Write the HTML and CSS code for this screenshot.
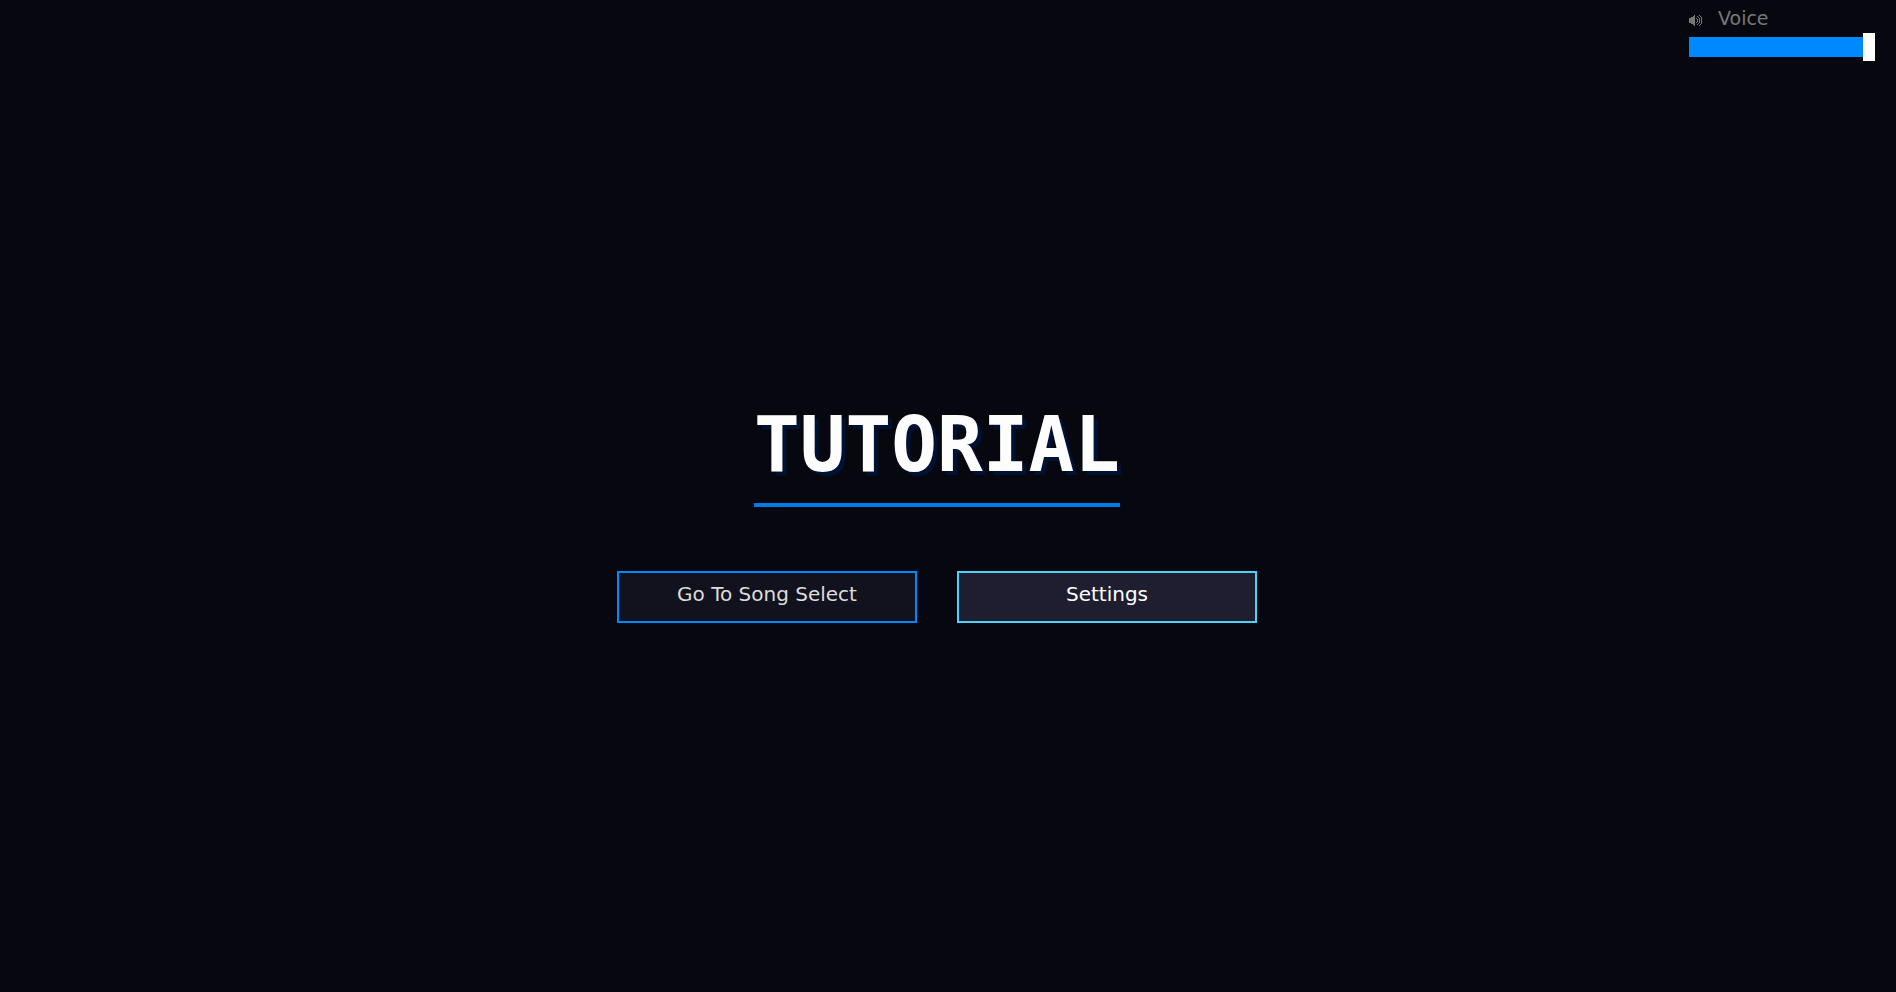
FILE: index.html
```html
<!DOCTYPE html>
<html lang="en">
<head>
  <meta charset="UTF-8">
  <meta name="viewport" content="width=device-width, initial-scale=1.0">
  <title>Tutorial</title>
  <link rel="stylesheet" href="styles.css">
</head>
<body>
  <div class="voice-control">
    <label for="voice">
      <svg class="voice-icon" viewBox="0 0 13 11" width="13" height="11" shape-rendering="crispEdges" aria-hidden="true">
        <path d="M0 3h2v5H0zM2 2h2v7H2zM4 1h1v9H4zM5 0h1v11H5z"/>
        <path d="M7 3h1v1H7zM8 4h1v3H8zM7 7h1v1H7zM8 1h1v1H8zM9 2h1v1H9zM10 3h1v5h-1zM9 8h1v1H9zM8 9h1v1H8zM10 0h1v1h-1zM11 1h1v1h-1zM12 2h1v7h-1zM11 9h1v1h-1zM10 10h1v1h-1z"/>
      </svg>
      <span>Voice</span>
    </label>
    <input type="range" id="voice" class="voice-slider" min="0" max="100" value="100">
  </div>

  <main class="menu">
    <h1 class="title">TUTORIAL</h1>
    <div class="menu-buttons">
      <button type="button" class="menu-btn">Go To Song Select</button>
      <button type="button" class="menu-btn active">Settings</button>
    </div>
  </main>
</body>
</html>
```
FILE: styles.css
```css
* {
  box-sizing: border-box;
}

body {
  margin: 0;
  min-height: 100vh;
  display: flex;
  flex-direction: column;
  padding-top: 8px;
  background-color: #07080f;
  color: #fff;
  font-family: "DejaVu Sans", sans-serif;
}

/* Volume slider in the top right corner */
.voice-control {
  align-self: flex-end;
  width: 186px;
  margin-right: 21px;
}

.voice-control label {
  display: flex;
  align-items: flex-start;
  gap: 16px;
  height: 24px;
  color: #777;
  font-size: 19px;
  line-height: 20px;
}

.voice-icon {
  margin-top: 7px;
  fill: #777;
}

.voice-slider {
  -webkit-appearance: none;
  appearance: none;
  display: block;
  width: 100%;
  height: 30px;
  margin: 0;
  background: linear-gradient(#0088ff, #0088ff) center / 100% 20px no-repeat;
  cursor: pointer;
}

.voice-slider::-webkit-slider-thumb {
  -webkit-appearance: none;
  width: 12px;
  height: 28px;
  background-color: #fff;
}

/* Title and buttons */
.menu {
  flex: 1;
  display: flex;
  flex-direction: column;
  align-items: center;
  justify-content: center;
  gap: 64px;
  padding: 0 22px 28px 0;
}

.title {
  margin: 0;
  padding-bottom: 16px;
  border-bottom: 4px solid #007ae5;
  color: #fdfdfd;
  font-family: "DejaVu Sans Mono", monospace;
  font-size: 76px;
  font-weight: bold;
  line-height: 84px;
  text-shadow: 4px 4px 0 #001233;
}

.menu-buttons {
  display: flex;
  gap: 40px;
}

.menu-btn {
  width: 300px;
  height: 52px;
  padding: 0 0 6px;
  border: 2px solid #0088ff;
  background-color: #12121f;
  color: #ddd;
  font-family: inherit;
  font-size: 20px;
  cursor: pointer;
}

.menu-btn:hover,
.menu-btn.active {
  border-color: #4dd2ff;
  background-color: #1e1e30;
  color: #fff;
}
```
